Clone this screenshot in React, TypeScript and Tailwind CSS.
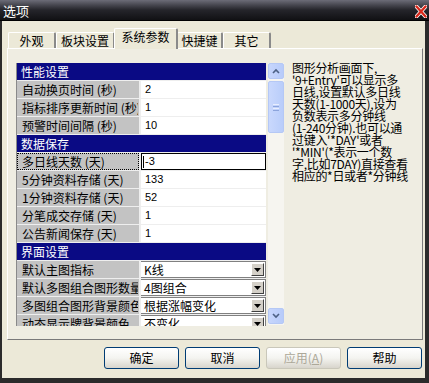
import React from "react";

type Row =
  | { kind: "head"; label: string }
  | { kind: "text"; label: string; value: string }
  | { kind: "edit"; label: string; value: string }
  | { kind: "combo"; label: string; value: string };

const rows: Row[] = [
  { kind: "head", label: "性能设置" },
  { kind: "text", label: "自动换页时间 (秒)", value: "2" },
  { kind: "text", label: "指标排序更新时间 (秒)", value: "1" },
  { kind: "text", label: "预警时间间隔 (秒)", value: "10" },
  { kind: "head", label: "数据保存" },
  { kind: "edit", label: "多日线天数 (天)", value: "-3" },
  { kind: "text", label: "5分钟资料存储 (天)", value: "133" },
  { kind: "text", label: "1分钟资料存储 (天)", value: "52" },
  { kind: "text", label: "分笔成交存储 (天)", value: "1" },
  { kind: "text", label: "公告新闻保存 (天)", value: "1" },
  { kind: "head", label: "界面设置" },
  { kind: "combo", label: "默认主图指标", value: "K线" },
  { kind: "combo", label: "默认多图组合图形数量", value: "4图组合" },
  { kind: "combo", label: "多图组合图形背景颜色", value: "根据涨幅变化" },
  { kind: "combo", label: "动态显示牌背景颜色", value: "不变化" },
];

const tabs = [
  { t: "外观", w: "w-[48px]" },
  { t: "板块设置", w: "w-[59px]" },
  { t: "系统参数", w: "w-[64px]" },
  { t: "快捷键", w: "w-[46px]" },
  { t: "其它", w: "w-[48px]" },
];

const help = [
  "图形分析画面下,",
  "'9+Entry'可以显示多",
  "日线,设置默认多日线",
  "天数(1-1000天),设为",
  "负数表示多分钟线",
  "(1-240分钟).也可以通",
  "过键入'*DAY'或者",
  "'*MIN'(*表示一个数",
  "字,比如7DAY)直接查看",
  "相应的*日或者*分钟线",
];

const cjk = { fontFamily: '"Noto Sans CJK SC", "Liberation Sans", sans-serif' };

function GridRow({ row }: { row: Row }) {
  if (row.kind === "head") {
    return (
      <div className="h-[17px] bg-[#0a0a84] text-white text-[12px] leading-[17px] pl-[4px] whitespace-nowrap">
        {row.label}
      </div>
    );
  }
  return (
    <div className="h-[17px] flex gap-[2px]">
      <div
        className={
          "w-[122px] shrink-0 bg-[#c3c3c3] text-[12px] leading-[15px] pl-[4px] whitespace-nowrap overflow-hidden text-black border " +
          (row.kind === "edit" ? "border-dotted border-black" : "border-transparent")
        }
      >
        {row.label}
      </div>
      {row.kind === "text" && (
        <div className="flex-1 bg-white text-[11px] leading-[17px] pl-[4px] text-black" style={{ fontFamily: '"Liberation Sans", sans-serif' }}>
          {row.value}
        </div>
      )}
      {row.kind === "edit" && (
        <div className="flex-1 bg-white border border-black flex items-center pl-[1px] text-[11px] text-black" style={{ fontFamily: '"Liberation Sans", sans-serif' }}>
          <span className="w-[1px] h-[12px] bg-black mr-[1px]" />
          {row.value}
        </div>
      )}
      {row.kind === "combo" && (
        <div className="flex-1 bg-white border-y border-r border-[#808080] flex items-center justify-between pl-[3px] pr-[1px] text-[12px] text-black">
          <span className="whitespace-nowrap">{row.value}</span>
          <span className="w-[13px] h-[13px] bg-[#d4d0c8] border border-t-white border-l-white border-r-[#404040] border-b-[#404040] flex items-center justify-center">
            <svg width="7" height="4" viewBox="0 0 7 4">
              <path d="M0 0h7L3.5 4z" fill="#000" />
            </svg>
          </span>
        </div>
      )}
    </div>
  );
}

function ScrollArrow({ up }: { up: boolean }) {
  return (
    <div className="h-[16px] rounded-[2px] border border-[#b5c8f5] bg-gradient-to-r from-[#c7d6fc] to-[#b7cbfa] flex items-center justify-center">
      <svg width="8" height="6" viewBox="0 0 8 6">
        <path d={up ? "M1 5L4 2L7 5" : "M1 1L4 4L7 1"} stroke="#4d6185" strokeWidth="1.6" fill="none" />
      </svg>
    </div>
  );
}

function Btn({ label, disabled }: { label: React.ReactNode; disabled?: boolean }) {
  return (
    <div
      className={
        "w-[75px] h-[22px] rounded-[3px] border flex items-center justify-center text-[12px] bg-gradient-to-b from-white via-[#f4f4f0] to-[#d8d5cc] " +
        (disabled ? "border-[#c9c7ba] text-[#aca899]" : "border-[#003c74] text-black")
      }
    >
      {label}
    </div>
  );
}

export default function App() {
  return (
    <div className="w-[429px] h-[383px] bg-[#2b2b2b] flex flex-col overflow-hidden" style={cjk}>
      <div className="h-[21px] shrink-0 flex items-center justify-between pl-[3px] pr-[2px] bg-gradient-to-b from-[#6c6c78] via-[#25252b] to-[#111114] border-b border-[#000]">
        <span className="text-white text-[13px] leading-none">选项</span>
        <svg width="12" height="13" viewBox="0 0 12 13" className="mt-[2px]">
          <path d="M1.5 1.5L10.5 11.5M10.5 1.5L1.5 11.5" stroke="#fff" strokeWidth="4" strokeLinecap="round" />
          <path d="M1.5 1.5L10.5 11.5M10.5 1.5L1.5 11.5" stroke="#d8291c" strokeWidth="2.4" strokeLinecap="round" />
        </svg>
      </div>

      <div className="flex-1 ml-[2px] mr-[4px] mb-[5px] bg-[#ece9d8] flex flex-col">
        <div className="flex items-end h-[27px] pl-[6px] text-[12px] text-black">
          {tabs.map((tab, i) =>
            i === 2 ? (
              <div
                key={tab.t}
                className={
                  tab.w +
                  " relative z-10 -mx-[1px] h-[21px] mb-[-1px] text-center bg-[#ece9d8] border-l border-t border-white border-r-2 border-r-[#8a8a8a] rounded-t-[2px] leading-[16px]"
                }
              >
                {tab.t}
              </div>
            ) : (
              <div
                key={tab.t}
                className={
                  tab.w +
                  " h-[16px] text-center bg-[#ece9d8] border-l border-t border-white border-r-2 border-r-[#8a8a8a] rounded-t-[2px] leading-[15px]"
                }
              >
                {tab.t}
              </div>
            )
          )}
        </div>

        <div className="ml-[5px] w-[416px] h-[292px] bg-[#efede2] border-l border-t border-white border-r border-b border-r-[#7a7a7a] border-b-[#7a7a7a] flex pl-[8px] pt-[14px]">
          <div className="w-[250px] h-[263px] border-l border-[#8a8a8a] bg-[#eeeeee] flex flex-col gap-[1px] overflow-hidden">
            {rows.map((r, i) => (
              <GridRow key={i} row={r} />
            ))}
          </div>
          <div className="ml-[2px] w-[16px] h-[262px] bg-[#f6f5f0] flex flex-col">
            <ScrollArrow up />
            <div className="mt-[2px] h-[52px] rounded-[2px] border border-[#b5c8f5] bg-gradient-to-r from-[#c9d8fd] to-[#b9cdfa] flex flex-col items-center justify-center gap-[1px]">
              <span className="w-[6px] h-[1px] bg-[#e8eefe]" />
              <span className="w-[6px] h-[1px] bg-[#8ca4dc]" />
              <span className="w-[6px] h-[1px] bg-[#e8eefe]" />
              <span className="w-[6px] h-[1px] bg-[#8ca4dc]" />
            </div>
            <div className="flex-1" />
            <div className="mb-[1px]">
              <ScrollArrow up={false} />
            </div>
          </div>
          <div className="ml-[8px] -mt-[1px] text-[12px] leading-[12px] text-black tracking-[-0.3px]">
            {help.map((l) => (
              <div key={l} className="whitespace-nowrap">
                {l}
              </div>
            ))}
          </div>
        </div>

        <div className="flex justify-end gap-[6px] mt-[7px] pr-[3px]">
          <Btn label="确定" />
          <Btn label="取消" />
          <Btn
            disabled
            label={
              <span>
                应用(<span className="underline">A</span>)
              </span>
            }
          />
          <Btn label="帮助" />
        </div>
      </div>
    </div>
  );
}
